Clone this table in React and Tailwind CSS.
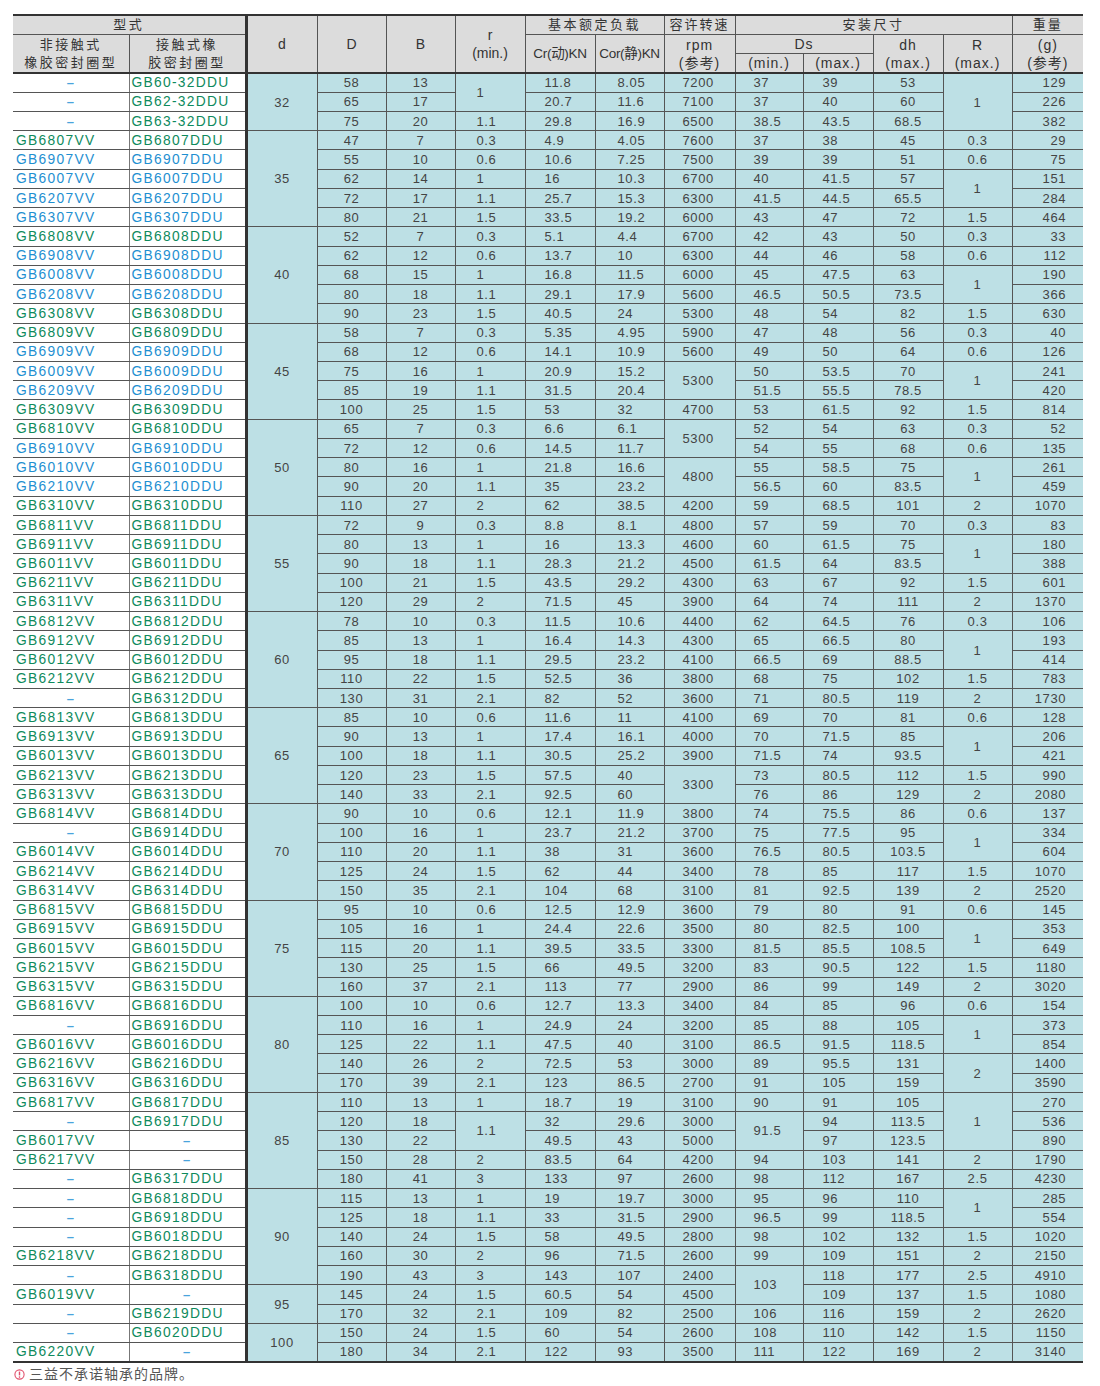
import React from "react";

// one string per row: VV | DDU | d | D | B | r | Cr | Cor | rpm | Ds min | Ds max | dh | R | weight
// "x*n" = rowspan n, "^" = covered by the cell above
const rows = [
  "–|GB60-32DDU|32*3|58|13|1*2|11.8|8.05|7200|37|39|53|1*3|129",
  "–|GB62-32DDU|^|65|17|^|20.7|11.6|7100|37|40|60|^|226",
  "–|GB63-32DDU|^|75|20|1.1|29.8|16.9|6500|38.5|43.5|68.5|^|382",
  "GB6807VV|GB6807DDU|35*5|47|7|0.3|4.9|4.05|7600|37|38|45|0.3|29",
  "GB6907VV|GB6907DDU|^|55|10|0.6|10.6|7.25|7500|39|39|51|0.6|75",
  "GB6007VV|GB6007DDU|^|62|14|1|16|10.3|6700|40|41.5|57|1*2|151",
  "GB6207VV|GB6207DDU|^|72|17|1.1|25.7|15.3|6300|41.5|44.5|65.5|^|284",
  "GB6307VV|GB6307DDU|^|80|21|1.5|33.5|19.2|6000|43|47|72|1.5|464",
  "GB6808VV|GB6808DDU|40*5|52|7|0.3|5.1|4.4|6700|42|43|50|0.3|33",
  "GB6908VV|GB6908DDU|^|62|12|0.6|13.7|10|6300|44|46|58|0.6|112",
  "GB6008VV|GB6008DDU|^|68|15|1|16.8|11.5|6000|45|47.5|63|1*2|190",
  "GB6208VV|GB6208DDU|^|80|18|1.1|29.1|17.9|5600|46.5|50.5|73.5|^|366",
  "GB6308VV|GB6308DDU|^|90|23|1.5|40.5|24|5300|48|54|82|1.5|630",
  "GB6809VV|GB6809DDU|45*5|58|7|0.3|5.35|4.95|5900|47|48|56|0.3|40",
  "GB6909VV|GB6909DDU|^|68|12|0.6|14.1|10.9|5600|49|50|64|0.6|126",
  "GB6009VV|GB6009DDU|^|75|16|1|20.9|15.2|5300*2|50|53.5|70|1*2|241",
  "GB6209VV|GB6209DDU|^|85|19|1.1|31.5|20.4|^|51.5|55.5|78.5|^|420",
  "GB6309VV|GB6309DDU|^|100|25|1.5|53|32|4700|53|61.5|92|1.5|814",
  "GB6810VV|GB6810DDU|50*5|65|7|0.3|6.6|6.1|5300*2|52|54|63|0.3|52",
  "GB6910VV|GB6910DDU|^|72|12|0.6|14.5|11.7|^|54|55|68|0.6|135",
  "GB6010VV|GB6010DDU|^|80|16|1|21.8|16.6|4800*2|55|58.5|75|1*2|261",
  "GB6210VV|GB6210DDU|^|90|20|1.1|35|23.2|^|56.5|60|83.5|^|459",
  "GB6310VV|GB6310DDU|^|110|27|2|62|38.5|4200|59|68.5|101|2|1070",
  "GB6811VV|GB6811DDU|55*5|72|9|0.3|8.8|8.1|4800|57|59|70|0.3|83",
  "GB6911VV|GB6911DDU|^|80|13|1|16|13.3|4600|60|61.5|75|1*2|180",
  "GB6011VV|GB6011DDU|^|90|18|1.1|28.3|21.2|4500|61.5|64|83.5|^|388",
  "GB6211VV|GB6211DDU|^|100|21|1.5|43.5|29.2|4300|63|67|92|1.5|601",
  "GB6311VV|GB6311DDU|^|120|29|2|71.5|45|3900|64|74|111|2|1370",
  "GB6812VV|GB6812DDU|60*5|78|10|0.3|11.5|10.6|4400|62|64.5|76|0.3|106",
  "GB6912VV|GB6912DDU|^|85|13|1|16.4|14.3|4300|65|66.5|80|1*2|193",
  "GB6012VV|GB6012DDU|^|95|18|1.1|29.5|23.2|4100|66.5|69|88.5|^|414",
  "GB6212VV|GB6212DDU|^|110|22|1.5|52.5|36|3800|68|75|102|1.5|783",
  "–|GB6312DDU|^|130|31|2.1|82|52|3600|71|80.5|119|2|1730",
  "GB6813VV|GB6813DDU|65*5|85|10|0.6|11.6|11|4100|69|70|81|0.6|128",
  "GB6913VV|GB6913DDU|^|90|13|1|17.4|16.1|4000|70|71.5|85|1*2|206",
  "GB6013VV|GB6013DDU|^|100|18|1.1|30.5|25.2|3900|71.5|74|93.5|^|421",
  "GB6213VV|GB6213DDU|^|120|23|1.5|57.5|40|3300*2|73|80.5|112|1.5|990",
  "GB6313VV|GB6313DDU|^|140|33|2.1|92.5|60|^|76|86|129|2|2080",
  "GB6814VV|GB6814DDU|70*5|90|10|0.6|12.1|11.9|3800|74|75.5|86|0.6|137",
  "–|GB6914DDU|^|100|16|1|23.7|21.2|3700|75|77.5|95|1*2|334",
  "GB6014VV|GB6014DDU|^|110|20|1.1|38|31|3600|76.5|80.5|103.5|^|604",
  "GB6214VV|GB6214DDU|^|125|24|1.5|62|44|3400|78|85|117|1.5|1070",
  "GB6314VV|GB6314DDU|^|150|35|2.1|104|68|3100|81|92.5|139|2|2520",
  "GB6815VV|GB6815DDU|75*5|95|10|0.6|12.5|12.9|3600|79|80|91|0.6|145",
  "GB6915VV|GB6915DDU|^|105|16|1|24.4|22.6|3500|80|82.5|100|1*2|353",
  "GB6015VV|GB6015DDU|^|115|20|1.1|39.5|33.5|3300|81.5|85.5|108.5|^|649",
  "GB6215VV|GB6215DDU|^|130|25|1.5|66|49.5|3200|83|90.5|122|1.5|1180",
  "GB6315VV|GB6315DDU|^|160|37|2.1|113|77|2900|86|99|149|2|3020",
  "GB6816VV|GB6816DDU|80*5|100|10|0.6|12.7|13.3|3400|84|85|96|0.6|154",
  "–|GB6916DDU|^|110|16|1|24.9|24|3200|85|88|105|1*2|373",
  "GB6016VV|GB6016DDU|^|125|22|1.1|47.5|40|3100|86.5|91.5|118.5|^|854",
  "GB6216VV|GB6216DDU|^|140|26|2|72.5|53|3000|89|95.5|131|2*2|1400",
  "GB6316VV|GB6316DDU|^|170|39|2.1|123|86.5|2700|91|105|159|^|3590",
  "GB6817VV|GB6817DDU|85*5|110|13|1|18.7|19|3100|90|91|105|1*3|270",
  "–|GB6917DDU|^|120|18|1.1*2|32|29.6|3000|91.5*2|94|113.5|^|536",
  "GB6017VV|–|^|130|22|^|49.5|43|5000|^|97|123.5|^|890",
  "GB6217VV|–|^|150|28|2|83.5|64|4200|94|103|141|2|1790",
  "–|GB6317DDU|^|180|41|3|133|97|2600|98|112|167|2.5|4230",
  "–|GB6818DDU|90*5|115|13|1|19|19.7|3000|95|96|110|1*2|285",
  "–|GB6918DDU|^|125|18|1.1|33|31.5|2900|96.5|99|118.5|^|554",
  "–|GB6018DDU|^|140|24|1.5|58|49.5|2800|98|102|132|1.5|1020",
  "GB6218VV|GB6218DDU|^|160|30|2|96|71.5|2600|99|109|151|2|2150",
  "–|GB6318DDU|^|190|43|3|143|107|2400|103*2|118|177|2.5|4910",
  "GB6019VV|–|95*2|145|24|1.5|60.5|54|4500|^|109|137|1.5|1080",
  "–|GB6219DDU|^|170|32|2.1|109|82|2500|106|116|159|2|2620",
  "–|GB6020DDU|100*2|150|24|1.5|60|54|2600|108|110|142|1.5|1150",
  "GB6220VV|–|^|180|34|2.1|122|93|3500|111|122|169|2|3140",
];

const blueModels = new Set([
  "6907", "6007", "6207", "6307",
  "6908", "6008", "6208",
  "6909", "6009", "6209",
  "6910", "6010", "6210",
]);

const colCls = [
  "text-left pl-[3px]",
  "text-left pl-[2px] border-l border-l-[#777]",
  "text-center border-l-[3px] border-l-[#333]",
  "text-center",
  "text-center",
  "text-left pl-[21px]",
  "text-left pl-[19px]",
  "text-left pl-[22px]",
  "text-left pl-[18px]",
  "text-left pl-[18px]",
  "text-left pl-[19px]",
  "text-center",
  "text-center",
  "text-right pr-[17px]",
];

function ModelCell({ name, index, first }) {
  const base =
    "p-0 h-[19.24px] bg-white border-b border-b-[#555] whitespace-nowrap " +
    colCls[index] +
    (first ? " border-t-2 border-t-[#333]" : "");

  if (name === "–") {
    return (
      <td className={base + " !text-center !pl-0"}>
        <span className="text-[#4aa3dc] font-bold">–</span>
      </td>
    );
  }

  const m = name.match(/GB(\d{4})/);
  const color =
    m && blueModels.has(m[1]) ? "text-[#1e8fd1]" : "text-[#0e8a5d]";

  return (
    <td className={base + " " + color + " text-[13.8px] tracking-[1.3px]"}>
      {name}
    </td>
  );
}

function HeadCell({ children, className = "", ...rest }) {
  return (
    <th
      {...rest}
      className={
        "p-0 bg-[#dcdcdc] border border-[#555] text-center font-normal leading-[18px] text-[#333] " +
        className
      }
    >
      {children}
    </th>
  );
}

export default function App() {
  return (
    <div
      className="bg-white w-[1100px] min-h-[1386px] pt-[14px] text-[#444]"
      style={{ fontFamily: '"Liberation Sans", "Noto Sans CJK SC", sans-serif' }}
    >
      <table className="ml-[13px] w-[1070px] table-fixed border-collapse border-t-2 border-b-2 border-[#333]">
        <colgroup>
          <col className="w-[116px]" />
          <col className="w-[117px]" />
          <col className="w-[71px]" />
          <col className="w-[69px]" />
          <col className="w-[69px]" />
          <col className="w-[70px]" />
          <col className="w-[70px]" />
          <col className="w-[69px]" />
          <col className="w-[71px]" />
          <col className="w-[68px]" />
          <col className="w-[70px]" />
          <col className="w-[70px]" />
          <col className="w-[69px]" />
          <col className="w-[71px]" />
        </colgroup>

        <thead className="text-[13px]">
          <tr className="h-[18px]">
            <HeadCell colSpan={2} className="border-l-0 tracking-[2.5px]">
              型式
            </HeadCell>
            <HeadCell rowSpan={3} className="border-l-[3px] border-l-[#333] text-[14px]">
              d
            </HeadCell>
            <HeadCell rowSpan={3} className="text-[14px]">D</HeadCell>
            <HeadCell rowSpan={3} className="text-[14px]">B</HeadCell>
            <HeadCell rowSpan={3} className="text-[14px]">
              r
              <br />
              (min.)
            </HeadCell>
            <HeadCell colSpan={2} className="tracking-[2.5px]">
              基本额定负载
            </HeadCell>
            <HeadCell className="tracking-[2px]">容许转速</HeadCell>
            <HeadCell colSpan={4} className="tracking-[2.5px]">
              安装尺寸
            </HeadCell>
            <HeadCell className="border-r-0 tracking-[2px]">重量</HeadCell>
          </tr>
          <tr className="h-[18px]">
            <HeadCell rowSpan={2} className="border-l-0 tracking-[2.5px]">
              非接触式
              <br />
              橡胶密封圈型
            </HeadCell>
            <HeadCell rowSpan={2} className="tracking-[2.5px]">
              接触式橡
              <br />
              胶密封圈型
            </HeadCell>
            <HeadCell rowSpan={2} className="text-[13.5px] tracking-[-0.3px]">
              Cr(动)KN
            </HeadCell>
            <HeadCell rowSpan={2} className="text-[13.5px] tracking-[-0.3px]">
              Cor(静)KN
            </HeadCell>
            <HeadCell rowSpan={2} className="text-[14px] tracking-[1px]">
              rpm
              <br />
              (参考)
            </HeadCell>
            <HeadCell colSpan={2} className="text-[14px] tracking-[1px]">
              Ds
            </HeadCell>
            <HeadCell rowSpan={2} className="text-[14px] tracking-[1px]">
              dh
              <br />
              (max.)
            </HeadCell>
            <HeadCell rowSpan={2} className="text-[14px] tracking-[1px]">
              R
              <br />
              (max.)
            </HeadCell>
            <HeadCell rowSpan={2} className="border-r-0 text-[14px] tracking-[1px]">
              (g)
              <br />
              (参考)
            </HeadCell>
          </tr>
          <tr className="h-[18px]">
            <HeadCell className="text-[14px] tracking-[1px]">(min.)</HeadCell>
            <HeadCell className="text-[14px] tracking-[1px]">(max.)</HeadCell>
          </tr>
        </thead>

        <tbody className="text-[13px] tracking-[0.6px] leading-[17px]">
          {rows.map((row, ri) => {
            const cells = row.split("|");
            const first = ri === 0;
            return (
              <tr key={ri} className="h-[19.24px]">
                <ModelCell name={cells[0]} index={0} first={first} />
                <ModelCell name={cells[1]} index={1} first={first} />
                {cells.slice(2).map((c, ci) => {
                  if (c === "^") return null;
                  const [val, span] = c.split("*");
                  const idx = ci + 2;
                  return (
                    <td
                      key={ci}
                      rowSpan={span ? Number(span) : undefined}
                      className={
                        "p-0 bg-[#bde0e5] whitespace-nowrap border-b border-b-[#555] " +
                        (idx > 2 ? "border-l border-l-[#555] " : "") +
                        colCls[idx] +
                        (first ? " border-t-2 border-t-[#333]" : "")
                      }
                    >
                      {val}
                    </td>
                  );
                })}
              </tr>
            );
          })}
        </tbody>
      </table>

      {/* footnote */}
      <div className="flex items-center gap-[4px] ml-[14px] mt-[1px] text-[14px] text-[#555] tracking-[1px]">
        <svg width="11" height="11" viewBox="0 0 11 11">
          <circle cx="5.5" cy="5.5" r="4.6" fill="none" stroke="#e0506c" strokeWidth="1.1" />
          <line x1="5.5" y1="2.6" x2="5.5" y2="6.4" stroke="#e0506c" strokeWidth="1.4" />
          <circle cx="5.5" cy="8.1" r="0.8" fill="#e0506c" />
        </svg>
        <span>三益不承诺轴承的品牌。</span>
      </div>
    </div>
  );
}
